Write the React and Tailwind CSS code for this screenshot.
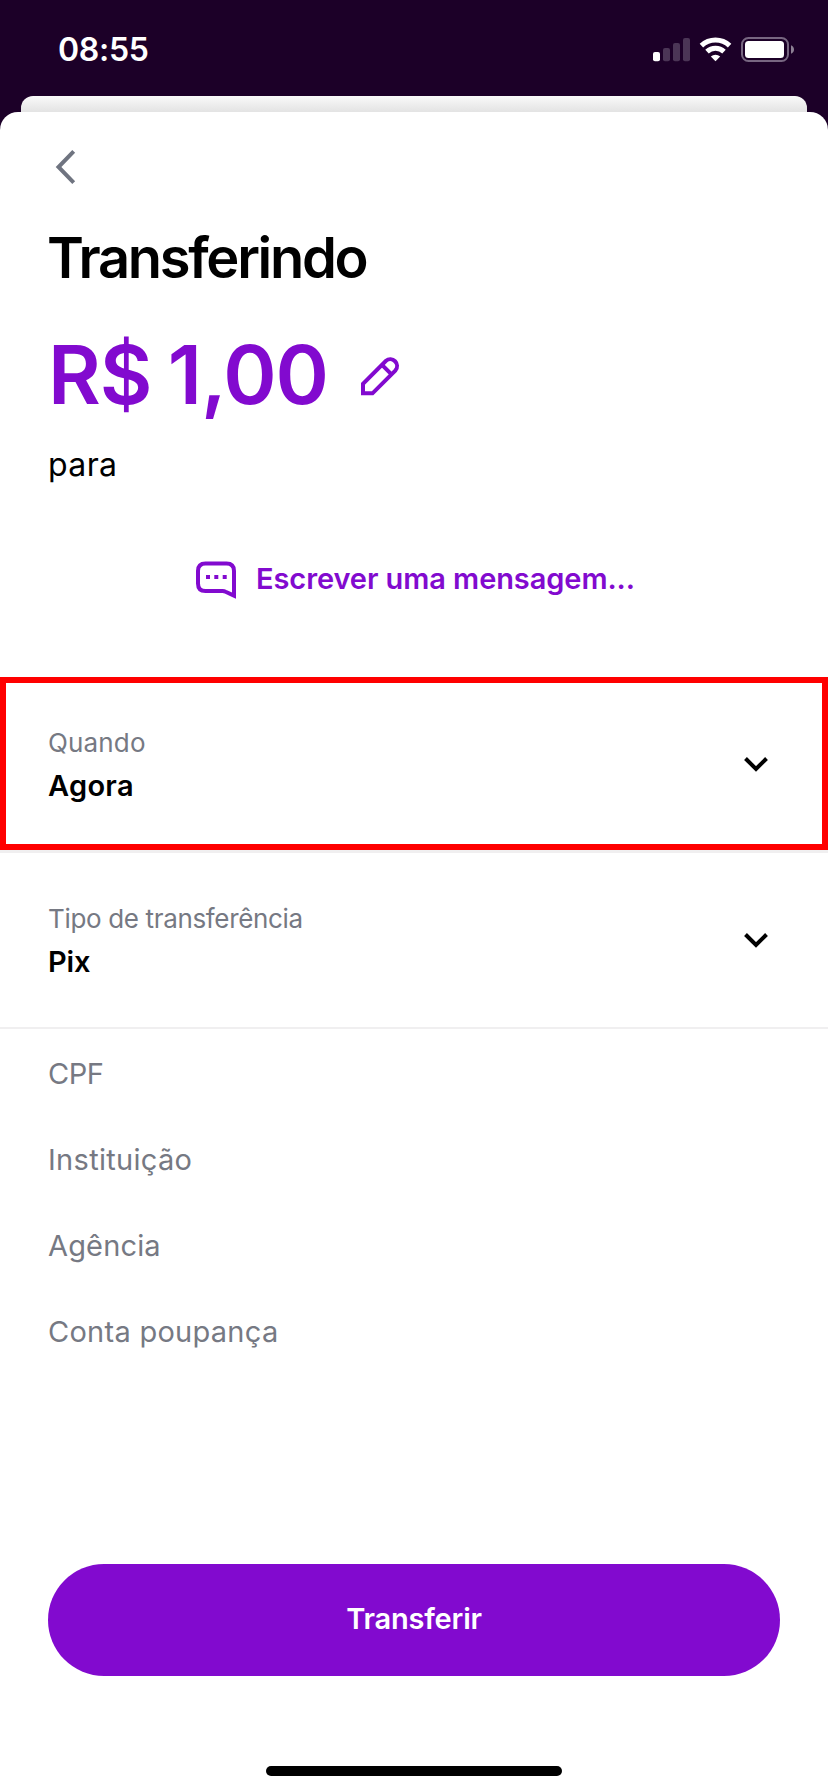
import React from "react";

function StatusBar() {
  return (
    <div className="flex h-24 items-start justify-between pl-[58px] pr-[33px]">
      <div className="mt-[29px] text-[32px] leading-[41px] font-semibold tracking-[-0.3px] text-white">08:55</div>
      <svg className="mt-[36px]" width="143" height="28" viewBox="652 36 143 28">
        <rect x="653" y="52" width="7" height="9.2" rx="2" fill="#fff" />
        <g fill="#4b3556">
          <rect x="663" y="48" width="7" height="13.2" rx="2" />
          <rect x="673" y="43" width="7" height="18.2" rx="2" />
          <rect x="683" y="38" width="7" height="23.2" rx="2" />
        </g>
        <g fill="none" stroke="#fff" strokeWidth="5">
          <path d="M701.4 45.6A20.5 20.5 0 0 1 729.6 45.6" />
          <path d="M707 51.6A12.2 12.2 0 0 1 724 51.6" />
        </g>
        <path d="M710.8 56.6A7.2 7.2 0 0 1 720.2 56.6L715.5 61.2Z" fill="#fff" />
        <rect x="742" y="38" width="46" height="23" rx="6.5" fill="none" stroke="#776681" strokeWidth="2" />
        <rect x="745" y="41" width="39" height="17" rx="3.5" fill="#fff" />
        <path d="M791 45.2Q794 46.5 794 49.5T791 53.8Z" fill="#8d8094" />
      </svg>
    </div>
  );
}

function BackIcon() {
  return (
    <svg width="24" height="38" viewBox="54 148 24 38" fill="none" stroke="#6f7480" strokeWidth="4">
      <path d="M73.7 151.3L58.5 167L73.7 182.7" />
    </svg>
  );
}

function PencilIcon() {
  return (
    <svg className="mt-0.5" width="40" height="40" viewBox="360 356 40 40" fill="none" stroke="#820acf" strokeWidth="4">
      <path d="M363 393.3V383.8L386 360.8A6.75 6.75 0 0 1 395.5 370.3L372.5 393.3Z" />
      <path d="M382 364.8L391.5 374.3" />
    </svg>
  );
}

function MessageIcon() {
  return (
    <svg className="mt-0.5" width="42" height="40" viewBox="195 560 42 40" fill="none" stroke="#820acf" strokeWidth="4">
      <path d="M234 595.6L225.6 591.7Q224.4 591.1 222.6 591.1H205.5Q198 591.1 198 583.6V570.9Q198 563.4 205.5 563.4H226.5Q234 563.4 234 570.9Z" />
      <path d="M206 577H210M214.3 577H218.3M222.7 577H226.7" />
    </svg>
  );
}

function Chevron() {
  return (
    <svg width="28" height="18" viewBox="0 0 28 18" fill="none" stroke="#000" strokeWidth="4">
      <path d="M3.5 3.5L14 14L24.5 3.5" />
    </svg>
  );
}

function SelectRow({ label, value, labelClass, valueClass, className }) {
  return (
    <div className={"flex h-[173px] items-center justify-between " + className}>
      <div className="flex flex-col">
        <span className={"text-[26px] leading-[43px] text-[#767983] " + labelClass}>{label}</span>
        <span className={"text-[29px] leading-[43px] font-semibold text-black " + valueClass}>{value}</span>
      </div>
      <Chevron />
    </div>
  );
}

export default function App() {
  return (
    <div className="flex h-[1792px] w-[828px] flex-col overflow-hidden bg-[#1c0028] font-['Inter',sans-serif]">
      <StatusBar />
      <div className="mx-[21px] h-4 rounded-t-[12px] bg-linear-to-b from-[#fafafa] to-[#e3e3e3]" />
      <main className="flex flex-1 flex-col rounded-t-[18px] bg-white">
        <button className="mt-[36px] ml-[54px] w-6">
          <BackIcon />
        </button>
        <h1 className="mt-[37px] pl-[47px] text-[56px] leading-[70px] font-semibold tracking-[-2.3px] text-black">
          Transferindo
        </h1>
        <div className="mt-[32px] flex h-[100px] items-center pl-12">
          <span className="w-[312px] text-[81px] leading-[100px] font-semibold tracking-[-1.2px] [word-spacing:-2.5px] whitespace-nowrap text-[#820acf]">
            R$ 1,00
          </span>
          <PencilIcon />
        </div>
        <p className="mt-[20px] pl-12 text-[32px] leading-10 tracking-[0.4px] text-black">para</p>
        <button className="mt-[74px] flex h-10 items-center pl-[195px] text-[29px] leading-10 font-semibold tracking-[-0.08px] text-[#820acf]">
          <MessageIcon />
          <span className="ml-[19px]">Escrever uma mensagem...</span>
        </button>
        <div className="mt-[78px] flex flex-col">
          <SelectRow
            label="Quando"
            value="Agora"
            labelClass="tracking-[0.15px]"
            valueClass="tracking-[0.3px]"
            className="border-6 border-[#ff0000] pr-[52px] pl-[42px]"
          />
          <div className="h-[3px] bg-[#f0eff0]" />
          <SelectRow
            label="Tipo de transferência"
            value="Pix"
            labelClass="tracking-[-0.34px]"
            valueClass="tracking-[-0.2px]"
            className="pr-[58px] pl-12"
          />
          <div className="mt-px h-[2px] bg-[#f0eff0]" />
        </div>
        <div className="mt-0.5 flex flex-col pl-12 text-[29px] leading-[86px] text-[#767983]">
          <span className="tracking-[-0.5px]">CPF</span>
          <span className="tracking-[0.3px]">Instituição</span>
          <span className="tracking-[0.15px]">Agência</span>
          <span className="tracking-[0.27px]">Conta poupança</span>
        </div>
        <button className="mx-12 mt-[189px] h-28 rounded-full bg-[#820acf] pb-[3px] text-[29px] font-semibold tracking-[-0.2px] text-white">
          Transferir
        </button>
        <div className="mt-[90px] ml-[266px] h-[10px] w-[296px] rounded-full bg-black" />
      </main>
    </div>
  );
}
